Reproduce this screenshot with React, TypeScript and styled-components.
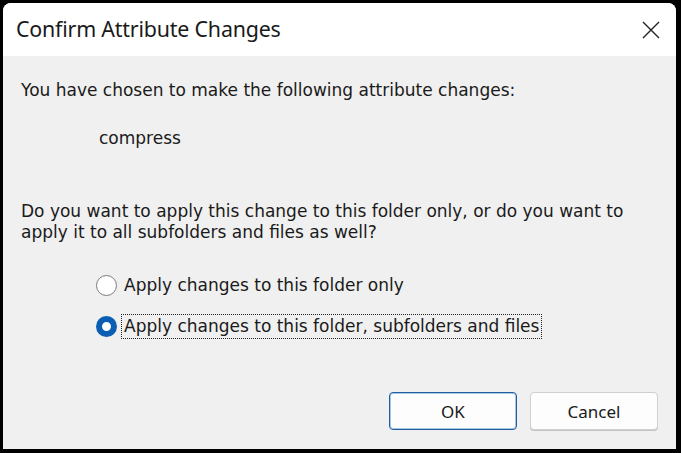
import React from "react";
import styled, { createGlobalStyle } from "styled-components";

const Global = createGlobalStyle`
  html, body { margin: 0; padding: 0; background: #000; }
  body { width: 681px; height: 453px; overflow: hidden; }
`;

const Screen = styled.div`
  width: 681px;
  height: 453px;
  background: #000;
  padding: 3px 5px 4px 3px;
  box-sizing: border-box;
  display: flex;
`;

const Dialog = styled.div`
  flex: 1;
  display: flex;
  flex-direction: column;
  background: #f0f0f0;
  border-radius: 8px 8px 0 0;
  overflow: hidden;
`;

const TitleBar = styled.div`
  height: 53px;
  flex: none;
  background: #fff;
  display: flex;
  align-items: center;
  justify-content: space-between;
  padding: 0 16px 0 13px;
`;

const Title = styled.div`
  font-family: "Noto Sans", sans-serif;
  font-size: 21.4px;
  color: #1a1a1a;
  letter-spacing: -0.2px;
  margin-top: -2px;
`;

const Body = styled.div`
  flex: 1;
  display: flex;
  flex-direction: column;
  padding: 24px 18px 0 18px;
  font-family: "DejaVu Sans", sans-serif;
  font-size: 17px;
  color: #1a1a1a;
`;

const Text = styled.div<{ $indent?: number; $mt?: number }>`
  margin-left: ${(p) => p.$indent ?? 0}px;
  margin-top: ${(p) => p.$mt ?? 0}px;
  line-height: 21px;
`;

const Options = styled.div`
  display: flex;
  flex-direction: column;
  gap: 18px;
  margin: 31px 0 0 75px;
`;

const Option = styled.label`
  display: flex;
  align-items: center;
  gap: 5px;
  line-height: 23px;
`;

const Radio = styled.span<{ $checked?: boolean }>`
  width: 21px;
  height: 21px;
  box-sizing: border-box;
  border-radius: 50%;
  flex: none;
  border: ${(p) => (p.$checked ? "6px solid #0a5fb4" : "1.5px solid #7a7a7a")};
  background: #fff;
`;

const Label = styled.span<{ $focus?: boolean }>`
  padding: 0 2px;
  outline: ${(p) => (p.$focus ? "1px dotted #222" : "none")};
`;

const Buttons = styled.div`
  margin-top: auto;
  margin-bottom: 19px;
  display: flex;
  justify-content: flex-end;
  gap: 13px;
`;

const Button = styled.button<{ $primary?: boolean }>`
  width: 128px;
  height: 38px;
  box-sizing: border-box;
  border-radius: 4px;
  background: #fdfdfd;
  border: 1px solid ${(p) => (p.$primary ? "#1f5fa0" : "#d0d0d0")};
  box-shadow: ${(p) => (p.$primary ? "inset 0 0 0 1px #a9c6e4" : "0 1px 0 #c4c4c4")};
  font-family: "Noto Sans", sans-serif;
  font-size: 17px;
  color: #1a1a1a;
  padding: 0;
`;

const Close = styled.svg`
  width: 18px;
  height: 18px;
`;

export default function App() {
  return (
    <>
      <Global />
      <Screen>
        <Dialog>
          <TitleBar>
            <Title>Confirm Attribute Changes</Title>
            <Close viewBox="0 0 18 18">
              <path d="M1 1 L17 17 M17 1 L1 17" stroke="#222" strokeWidth="1.4" fill="none" />
            </Close>
          </TitleBar>
          <Body>
            <Text>You have chosen to make the following attribute changes:</Text>
            <Text $indent={78} $mt={27}>compress</Text>
            <Text $mt={52}>
              Do you want to apply this change to this folder only, or do you want to
              <br />
              apply it to all subfolders and files as well?
            </Text>
            <Options>
              <Option>
                <Radio />
                <Label>Apply changes to this folder only</Label>
              </Option>
              <Option>
                <Radio $checked />
                <Label $focus>Apply changes to this folder, subfolders and files</Label>
              </Option>
            </Options>
            <Buttons>
              <Button $primary>OK</Button>
              <Button>Cancel</Button>
            </Buttons>
          </Body>
        </Dialog>
      </Screen>
    </>
  );
}
